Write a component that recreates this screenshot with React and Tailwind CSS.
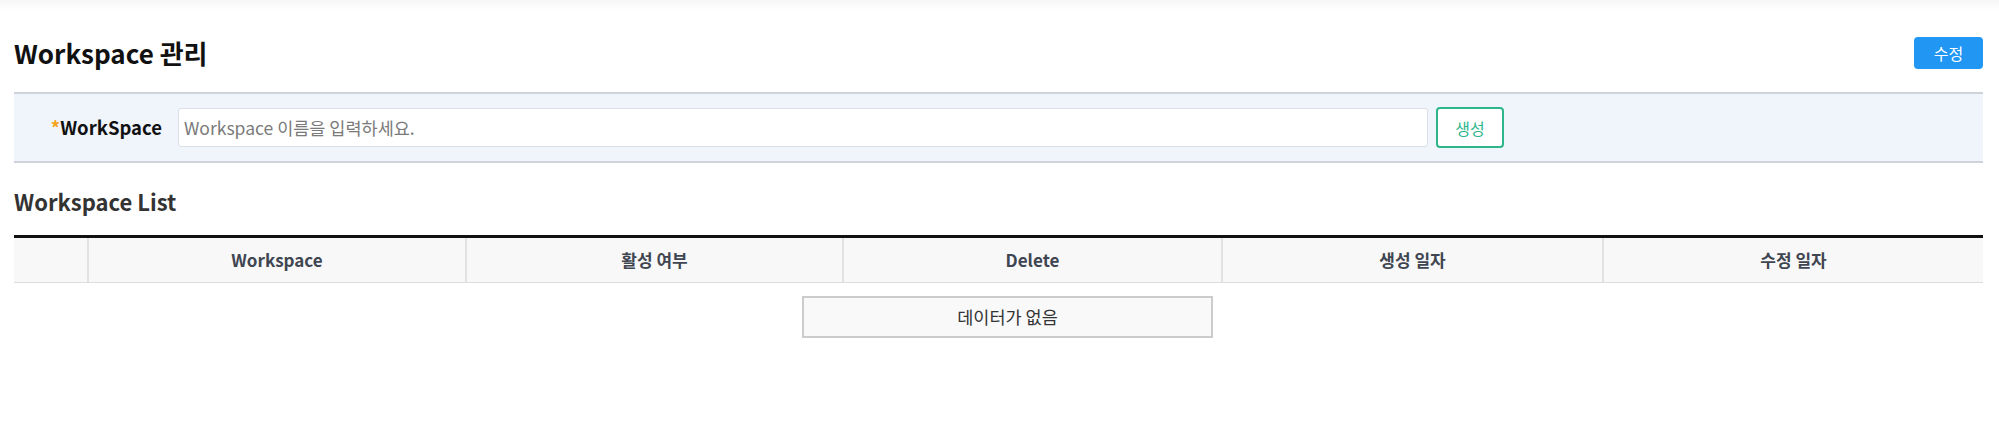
import React from 'react';

const font = { fontFamily: '"Noto Sans CJK KR", "Noto Sans", sans-serif' };

const columns = ['', 'Workspace', '활성 여부', 'Delete', '생성 일자', '수정 일자'];

function App() {
  return (
    <div className="w-[1999px] h-[421px] bg-white" style={font}>
      <div className="h-[10px] bg-gradient-to-b from-[#f6f6f6] to-white" />
      <div className="pl-[14px] pr-[16px]">
        {/* 헤더 */}
        <div className="mt-[27px] flex items-center justify-between h-[32px]">
          <h1 className="text-[26px] font-bold text-[#111] leading-none">Workspace 관리</h1>
          <button className="w-[69px] h-[32px] rounded-[4px] bg-[#2196f3] text-white text-[16px]">
            수정
          </button>
        </div>

        {/* 입력 패널 */}
        <div className="mt-[23px] h-[71px] border-y-2 border-[#cfd4dc] bg-[#f0f4fb] flex items-center">
          <label className="w-[148px] text-right text-[18.5px] font-bold text-[#111]">
            <span className="text-[#f7a21b]">*</span>WorkSpace
          </label>
          <input
            className="ml-[16px] w-[1250px] h-[39px] rounded-[3px] border border-[#dcdfe6] bg-white px-[5px] text-[17.5px] text-[#333] placeholder:text-[#7a7a7a] outline-none"
            placeholder="Workspace 이름을 입력하세요."
          />
          <button className="ml-[8px] w-[68px] h-[41px] rounded-[4px] border-2 border-[#2db68b] bg-white text-[#2db68b] text-[16px]">
            생성
          </button>
        </div>

        {/* 목록 */}
        <h2 className="mt-[23px] text-[22px] font-bold text-[#333] leading-[31px]">Workspace List</h2>
        <div className="mt-[18px] border-t-[3px] border-[#111]">
          <div className="grid grid-cols-[73px_378px_377px_379px_381px_381px] h-[45px] bg-[#f8f8f8] border-b border-[#dddddd]">
            {columns.map((c, i) => (
              <div
                key={i}
                className={`flex items-center justify-center text-[17px] font-bold text-[#3f4652] ${i > 0 ? 'border-l-2 border-[#e2e2e2]' : ''}`}
              >
                {c}
              </div>
            ))}
          </div>
          <div className="mt-[13px] ml-[788px] w-[411px] h-[42px] border-2 border-[#cccccc] bg-[#f9f9f9] flex items-center justify-center text-[17.5px] text-[#333]">
            데이터가 없음
          </div>
        </div>
      </div>
    </div>
  );
}

export default App;
